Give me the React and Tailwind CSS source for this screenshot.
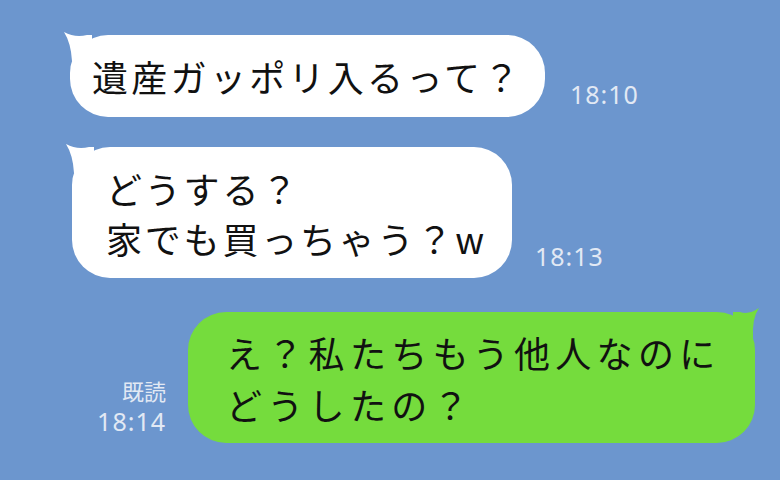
const jp = { fontFamily: '"Noto Sans CJK JP", "Noto Sans", sans-serif' }
const num = { fontFamily: '"Noto Sans", "Noto Sans CJK JP", sans-serif' }

function TailLeft({ color }) {
  return (
    <svg className="absolute -left-[8px] -top-[4px] h-[34px] w-[34px]" viewBox="0 0 34 34">
      <path d="M2 1 Q13 7 25 4 L30 4 L30 30 L10 30 Q9 12 2 1 Z" fill={color} />
    </svg>
  )
}

function TailRight({ color }) {
  return (
    <svg className="absolute -right-[8px] -top-[6px] h-[34px] w-[34px]" viewBox="0 0 34 34">
      <path d="M30 2 Q20 9 11 6 L4 6 L4 32 L24 32 Q23 12 30 2 Z" fill={color} />
    </svg>
  )
}

function Time({ children, className = '' }) {
  return (
    <div style={num} className={`text-[25px] tracking-[1px] text-[#e2e9f4] ${className}`}>
      {children}
    </div>
  )
}

export default function App() {
  return (
    <div className="flex h-[480px] w-[780px] flex-col overflow-hidden bg-[#6c96ce]">
      <div className="mt-[35px] flex items-end gap-[25px] pl-[70px]">
        <div className="relative flex h-[82px] w-[475px] items-center rounded-[38px] bg-white pl-[22px]">
          <TailLeft color="#ffffff" />
          <span style={jp} className="relative text-[36px] leading-[50px] tracking-[3.3px] text-[#111]">
            遺産ガッポリ入るって？
          </span>
        </div>
        <Time className="mb-[9px] leading-[28px]">18:10</Time>
      </div>

      <div className="mt-[30px] flex items-end gap-[23px] pl-[72px]">
        <div className="relative flex h-[131px] w-[440px] items-center rounded-[38px] bg-white pl-[34px]">
          <TailLeft color="#ffffff" />
          <p style={jp} className="relative text-[36px] leading-[50px] tracking-[2.8px] text-[#111]">
            どうする？
            <br />
            家でも買っちゃう？w
          </p>
        </div>
        <Time className="mb-[8px] leading-[28px]">18:13</Time>
      </div>

      <div className="mt-[34px] flex items-end justify-end gap-[22px] pr-[25px]">
        <div className="mb-[8px] flex flex-col items-end">
          <div style={jp} className="text-[22px] leading-[24px] text-[#e2e9f4]">既読</div>
          <Time className="mt-[5px] leading-[28px]">18:14</Time>
        </div>
        <div className="relative flex h-[131px] w-[567px] items-center rounded-[38px] bg-[#75dc3d] pl-[38px]">
          <TailRight color="#75dc3d" />
          <p style={jp} className="relative text-[36px] leading-[52px] tracking-[5.3px] text-[#111]">
            え？私たちもう他人なのに
            <br />
            どうしたの？
          </p>
        </div>
      </div>
    </div>
  )
}
